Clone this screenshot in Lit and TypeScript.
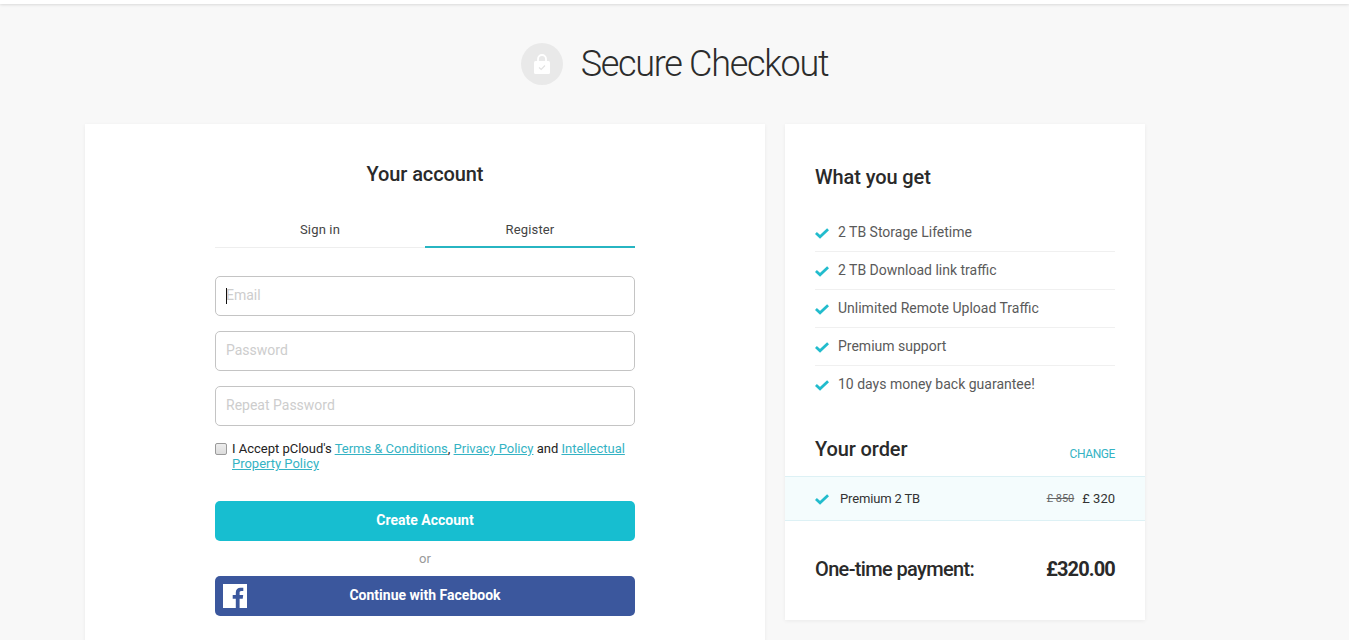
import { LitElement, css, html } from "lit";
import { customElement } from "lit/decorators.js";

const check = html`<svg class="check" width="14" height="12" viewBox="0 0 15 12"><path d="M1 6 L5.4 10 L14 2" fill="none" stroke="#22bccd" stroke-width="3"/></svg>`;

const perks = [
  "2 TB Storage Lifetime",
  "2 TB Download link traffic",
  "Unlimited Remote Upload Traffic",
  "Premium support",
  "10 days money back guarantee!",
];

@customElement("app-root")
export class AppRoot extends LitElement {
  static styles = css`
    :host {
      display: block;
      height: 640px;
      overflow: hidden;
      background: #f8f8f8;
      font-family: Roboto, "Liberation Sans", sans-serif;
      color: #222;
    }

    .topbar {
      height: 4px;
      background: #fff;
      box-shadow: 0 1px 3px rgba(0, 0, 0, 0.12);
    }

    .title {
      height: 120px;
      display: flex;
      align-items: center;
      justify-content: center;
      gap: 18px;
      box-sizing: border-box;
      padding-bottom: 1px;
    }

    .lock {
      width: 42px;
      height: 42px;
      border-radius: 50%;
      background: #e9e9e9;
      display: flex;
      align-items: center;
      justify-content: center;
    }

    h1 {
      margin: 0;
      font-size: 36px;
      font-weight: 300;
      letter-spacing: -1.3px;
      color: #2c2c2c;
    }

    .columns {
      display: flex;
      align-items: flex-start;
      gap: 20px;
      padding-left: 85px;
    }

    .card {
      background: #fff;
      box-shadow: 0 1px 4px rgba(0, 0, 0, 0.06);
    }

    .account {
      width: 680px;
      height: 560px;
      box-sizing: border-box;
      padding: 37px 130px 0;
    }

    h2 {
      margin: 0;
      font-size: 20px;
      font-weight: 500;
      line-height: 26px;
      letter-spacing: -0.1px;
      color: #2a2a2a;
    }

    .account h2 {
      text-align: center;
    }

    .tabs {
      display: flex;
      margin-top: 35px;
      border-bottom: 1px solid #eee;
    }

    .tab {
      flex: 1;
      text-align: center;
      font-size: 13px;
      line-height: 16px;
      padding-bottom: 8px;
      color: #444;
      letter-spacing: 0.15px;
      margin-bottom: -1px;
      border-bottom: 2px solid transparent;
    }

    .tab.active {
      border-bottom-color: #27b5c2;
    }

    .fields {
      display: flex;
      flex-direction: column;
      gap: 15px;
      margin-top: 28px;
    }

    .field {
      position: relative;
      height: 40px;
      box-sizing: border-box;
      border: 1px solid #c4c4c4;
      border-radius: 5px;
      padding: 0 10px;
      font-size: 14px;
      line-height: 37px;
      color: #cdcdcd;
    }

    .caret {
      position: absolute;
      left: 10px;
      top: 11px;
      width: 1px;
      height: 16px;
      background: #111;
    }

    .terms {
      display: flex;
      gap: 5px;
      margin-top: 15px;
      font-size: 13px;
      line-height: 15px;
      letter-spacing: -0.01px;
      color: #222;
    }

    .box {
      flex: none;
      width: 10px;
      height: 10px;
      margin-top: 2px;
      border: 1px solid #9a9a9a;
      border-radius: 2px;
      background: linear-gradient(#ededed, #dcdcdc);
    }

    a {
      color: #35b3c4;
      text-decoration: underline;
    }

    .btn {
      height: 40px;
      border-radius: 5px;
      display: flex;
      align-items: center;
      justify-content: center;
      position: relative;
      color: #fff;
      font-size: 14px;
      font-weight: 700;
      padding-bottom: 2px;
      box-sizing: border-box;
    }

    .create {
      margin-top: 30px;
      background: #17bed0;
    }

    .or {
      text-align: center;
      font-size: 13px;
      line-height: 15px;
      margin: 10px 0;
      color: #999;
    }

    .fb {
      background: #3b579d;
    }

    .fb svg {
      position: absolute;
      left: 8px;
      top: 8px;
    }

    .side {
      width: 360px;
      height: 496px;
      box-sizing: border-box;
      padding-top: 40px;
    }

    .side h2 {
      padding: 0 30px;
    }

    .perks {
      list-style: none;
      margin: 24px 30px 0;
      padding: 0;
    }

    .perks li {
      display: flex;
      align-items: center;
      gap: 9px;
      height: 38px;
      box-sizing: border-box;
      border-bottom: 1px solid #f0f0f0;
      font-size: 14px;
      color: #5a5a5a;
    }

    .perks li span {
      margin-top: -2px;
    }

    .perks li:last-child {
      border-bottom: 0;
    }

    .order-head {
      display: flex;
      justify-content: space-between;
      align-items: flex-end;
      padding: 0 30px;
      margin-top: 32px;
    }

    .order-head h2 {
      padding: 0;
    }

    .change {
      font-size: 12px;
      line-height: 15px;
      letter-spacing: -0.4px;
      color: #35b3c4;
    }

    .order {
      display: flex;
      align-items: center;
      height: 45px;
      box-sizing: border-box;
      margin-top: 14px;
      padding: 0 30px;
      background: #f4fcfd;
      border-top: 1px solid #ddf1f5;
      border-bottom: 1px solid #ddf1f5;
      font-size: 13px;
      color: #333;
    }

    .order .name {
      margin-left: 11px;
      flex: 1;
      letter-spacing: -0.15px;
    }

    .order s {
      font-size: 11px;
      color: #666;
      margin-right: 8px;
    }

    .total {
      display: flex;
      justify-content: space-between;
      align-items: center;
      padding: 0 30px;
      margin-top: 35px;
      font-size: 20px;
      line-height: 26px;
      font-weight: 500;
      letter-spacing: -0.65px;
      color: #2a2a2a;
    }

    .total b {
      letter-spacing: -0.85px;
      font-weight: 700;
    }
  `;

  render() {
    return html`
      <div class="topbar"></div>
      <div class="title">
        <div class="lock">
          <svg width="16" height="20" viewBox="0 0 16 20">
            <path d="M4 8V5a4 4 0 0 1 8 0v3" fill="none" stroke="#fff" stroke-width="1.8"/>
            <rect x="0" y="7" width="16" height="13" rx="1.5" fill="#fff"/>
            <path d="M5 13.5 L7.2 15.5 L11 11.5" fill="none" stroke="#e2e2e2" stroke-width="1.2"/>
          </svg>
        </div>
        <h1>Secure Checkout</h1>
      </div>
      <div class="columns">
        <div class="card account">
          <h2>Your account</h2>
          <div class="tabs">
            <div class="tab">Sign in</div>
            <div class="tab active">Register</div>
          </div>
          <div class="fields">
            <div class="field">Email<span class="caret"></span></div>
            <div class="field">Password</div>
            <div class="field">Repeat Password</div>
          </div>
          <div class="terms">
            <span class="box"></span>
            <span>I Accept pCloud's <a>Terms &amp; Conditions</a>, <a>Privacy Policy</a> and <a>Intellectual Property Policy</a></span>
          </div>
          <div class="btn create">Create Account</div>
          <div class="or">or</div>
          <div class="btn fb">
            <svg width="24" height="24" viewBox="0 0 24 24">
              <rect width="24" height="24" fill="#fff"/>
              <path d="M16.6 24v-9.3h3.1l.5-3.6h-3.6V8.800c0-1 .3-1.800 1.800-1.800h1.900V3.800c-.3 0-1.500-.1-2.800-.1-2.800 0-4.700 1.700-4.700 4.800v2.600H9.700v3.600h3.100V24z" fill="#3b579d"/>
            </svg>
            Continue with Facebook
          </div>
        </div>
        <div class="card side">
          <h2>What you get</h2>
          <ul class="perks">
            ${perks.map((p) => html`<li>${check}<span>${p}</span></li>`)}
          </ul>
          <div class="order-head">
            <h2>Your order</h2>
            <span class="change">CHANGE</span>
          </div>
          <div class="order">
            ${check}
            <span class="name">Premium 2 TB</span>
            <s>£ 850</s>
            <span>£ 320</span>
          </div>
          <div class="total">
            <span>One-time payment:</span>
            <b>£320.00</b>
          </div>
        </div>
      </div>
    `;
  }
}
